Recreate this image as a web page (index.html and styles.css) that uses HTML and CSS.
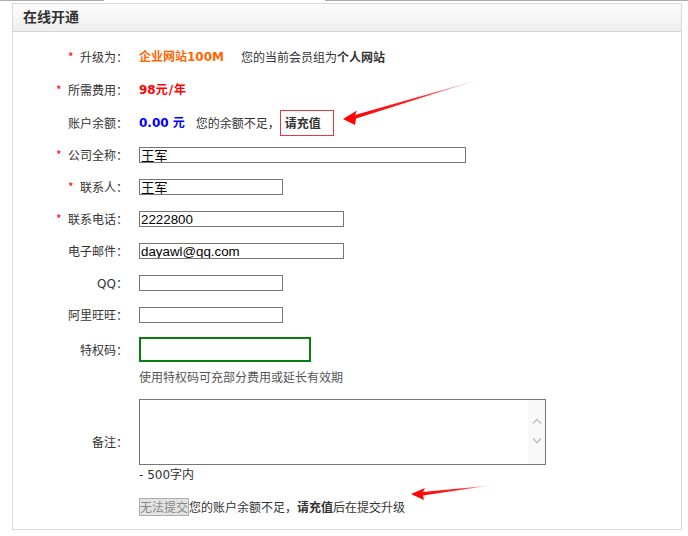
FILE: index.html
```html
<!DOCTYPE html>
<html lang="zh-CN">
<head>
<meta charset="utf-8">
<title>在线开通</title>
<link rel="stylesheet" href="styles.css">
</head>
<body>
<div class="page">
  <div class="topline"><span class="seg-a"></span><span class="seg-b"></span></div>
  <div class="panel">
    <div class="panel-head">在线开通</div>
    <div class="panel-body">
      <div class="row r-a">
        <div class="label"><span class="req">*</span>升级为：</div>
        <div class="value"><b class="orange lat">企业网站100M</b><span class="gap">您的当前会员组为<b>个人网站</b></span></div>
      </div>
      <div class="row r-a">
        <div class="label"><span class="req">*</span>所需费用：</div>
        <div class="value"><b class="red lat">98元<span class="slash">/</span>年</b></div>
      </div>
      <div class="row r-a">
        <div class="label">账户余额：</div>
        <div class="value"><b class="blue lat">0.00 元</b><span class="gap2">您的余额不足，</span><span class="charge"><b>请充值</b></span></div>
      </div>
      <div class="row">
        <div class="label"><span class="req">*</span>公司全称：</div>
        <div class="value"><input class="inp w-l" type="text" value="王军"></div>
      </div>
      <div class="row">
        <div class="label"><span class="req">*</span>联系人：</div>
        <div class="value"><input class="inp w-s" type="text" value="王军"></div>
      </div>
      <div class="row">
        <div class="label"><span class="req">*</span>联系电话：</div>
        <div class="value"><input class="inp w-m" type="text" value="2222800"></div>
      </div>
      <div class="row">
        <div class="label">电子邮件：</div>
        <div class="value"><input class="inp w-m" type="text" value="dayawl@qq.com"></div>
      </div>
      <div class="row">
        <div class="label"><span class="lat">QQ</span>：</div>
        <div class="value"><input class="inp w-s" type="text" value=""></div>
      </div>
      <div class="row">
        <div class="label">阿里旺旺：</div>
        <div class="value"><input class="inp w-s" type="text" value=""></div>
      </div>
      <div class="row row-top">
        <div class="label label-code">特权码：</div>
        <div class="value">
          <input class="code" type="text" value="">
          <div class="hint">使用特权码可充部分费用或延长有效期</div>
        </div>
      </div>
      <div class="row row-note">
        <div class="label">备注：</div>
        <div class="value">
          <div class="ta">
            <textarea class="ta-input"></textarea>
            <div class="ta-bar">
              <svg width="10" height="6" viewBox="0 0 10 6"><path d="M1 5.5 L5 1.5 L9 5.5" fill="none" stroke="#c4c4c4" stroke-width="1.6"/></svg>
              <svg width="10" height="6" viewBox="0 0 10 6"><path d="M1 0.5 L5 4.5 L9 0.5" fill="none" stroke="#c4c4c4" stroke-width="1.6"/></svg>
            </div>
          </div>
          <div class="limit"><span class="lat">- 500</span>字内</div>
        </div>
      </div>
      <div class="row row-btn">
        <div class="label"></div>
        <div class="value"><button class="btn" type="button" disabled>无法提交</button>您的账户余额不足，<b>请充值</b>后在提交升级</div>
      </div>
    </div>
  </div>
  <svg class="arrows" width="688" height="536" viewBox="0 0 688 536">
    <defs>
      <linearGradient id="g1" gradientUnits="userSpaceOnUse" x1="343" y1="119" x2="476" y2="80">
        <stop offset="0" stop-color="#f00"/>
        <stop offset="0.55" stop-color="#f22"/>
        <stop offset="1" stop-color="#ffc8c8"/>
      </linearGradient>
      <linearGradient id="g2" gradientUnits="userSpaceOnUse" x1="411" y1="494" x2="490" y2="485">
        <stop offset="0" stop-color="#f00"/>
        <stop offset="0.6" stop-color="#f22"/>
        <stop offset="1" stop-color="#ffc8c8"/>
      </linearGradient>
    </defs>
    <polygon points="343,119 357,110.5 355,115 476,80.5 356,118.5 355,125" fill="url(#g1)"/>
    <polygon points="411,494 425,488 423,492 490,485.5 423,495.5 424,500" fill="url(#g2)"/>
  </svg>
</div>
</body>
</html>
```

FILE: styles.css
```css
html, body {
  margin: 0;
  padding: 0;
  background: #fff;
}
body {
  font-family: "Noto Sans CJK SC", "DejaVu Sans", sans-serif;
  font-size: 12px;
  color: #333;
}
.page {
  position: relative;
  width: 688px;
  height: 536px;
  overflow: hidden;
}
.topline {
  display: flex;
  height: 1px;
}
.seg-a {
  width: 104px;
  background: #adadad;
}
.seg-b {
  flex: 1;
  margin-left: 221px;
  background: #adadad;
}
.panel {
  margin: 2px 0 0 12px;
  width: 670px;
  box-sizing: border-box;
  border: 1px solid #dadada;
}
.panel-head {
  height: 27px;
  line-height: 25px;
  padding-left: 10px;
  font-size: 14px;
  font-weight: bold;
  color: #333;
  background: linear-gradient(to bottom, #fdfdfd, #eeeeee);
  border-bottom: 1px solid #d6d6d6;
}
.panel-body {
  padding: 8px 0 13px 0;
}
.row {
  display: flex;
  align-items: center;
  height: 32px;
}
.row.r-a {
  height: 33px;
}
.label {
  width: 115px;
  flex: none;
  text-align: right;
  line-height: 18px;
  color: #333;
}
.req {
  display: inline-block;
  width: 12px;
  text-align: left;
  color: #f00;
}
.lat {
  font-family: "DejaVu Sans", "Noto Sans CJK SC", sans-serif;
}
.slash {
  padding: 0 1px;
}
.value {
  padding-left: 11px;
  line-height: 18px;
  display: flex;
  align-items: center;
}
.orange { color: #f60; }
.red { color: #f00; }
.blue { color: #00f; }
.gap { margin-left: 17px; }
.gap2 { margin-left: 11px; }
.charge {
  display: inline-block;
  height: 24px;
  line-height: 24px;
  padding: 0 12px 0 4px;
  border: 1px solid #e53a3a;
}
.inp {
  box-sizing: border-box;
  height: 16px;
  margin: 0;
  padding: 0 1px;
  border: 1px solid #767676;
  font-family: "Liberation Sans", "Noto Sans CJK SC", sans-serif;
  font-size: 13.33px;
  line-height: 14px;
  color: #000;
  background: #fff;
  outline: none;
}
.w-l { width: 327px; }
.w-m { width: 205px; }
.w-s { width: 144px; }
.row-top {
  height: auto;
  align-items: flex-start;
}
.row-top .value {
  flex-direction: column;
  align-items: flex-start;
}
.label-code {
  margin-top: 6px;
  line-height: 25px;
}
.code {
  box-sizing: border-box;
  width: 172px;
  height: 25px;
  margin: 6px 0 0 0;
  border: 2px solid #0a7d0a;
  padding: 0 2px;
  outline: none;
  background: #fff;
}
.hint {
  margin-top: 6px;
  line-height: 18px;
  color: #555;
}
.row-note {
  height: auto;
  margin-top: 13px;
}
.row-note .value {
  flex-direction: column;
  align-items: flex-start;
}
.ta {
  box-sizing: border-box;
  width: 407px;
  height: 66px;
  border: 1px solid #767676;
  display: flex;
}
.ta-input {
  flex: 1;
  border: none;
  margin: 0;
  padding: 2px;
  resize: none;
  outline: none;
  background: #fff;
}
.ta-bar {
  width: 17px;
  background: #f8f8f8;
  display: flex;
  flex-direction: column;
  align-items: center;
  padding-top: 18px;
  gap: 14px;
}
.ta-bar svg { display: block; }
.limit {
  line-height: 18px;
  color: #333;
}
.row-btn {
  height: 18px;
  margin-top: 14px;
}
.btn {
  box-sizing: border-box;
  width: 50px;
  height: 18px;
  margin: 0;
  padding: 0;
  border: 1px solid #adadad;
  background: #e3e3e3;
  color: #888;
  font-family: "Noto Sans CJK SC", sans-serif;
  font-size: 12px;
  line-height: 16px;
}
.arrows {
  position: absolute;
  left: 0;
  top: 0;
  pointer-events: none;
}
```
